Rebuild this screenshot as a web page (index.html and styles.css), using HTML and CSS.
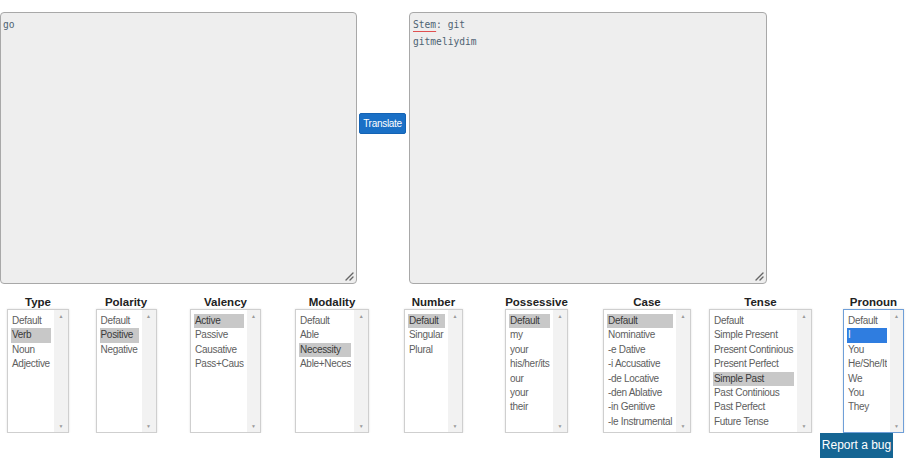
FILE: index.html
```html
<!DOCTYPE html>
<html lang="en">

<head>
 <meta charset="UTF-8">
 <meta name="viewport" content="width=device-width, initial-scale=1.0">
 <title>Turkish Verb Translator</title>
 <link rel="stylesheet" href="styles.css">
</head>

<body>
 <div class="translator">
  <div class="area">go
   <svg class="grip" width="10" height="10" viewBox="0 0 10 10"><path d="M9 2 L2 9 M9 6 L6 9" stroke="#666" stroke-width="1.4" stroke-linecap="round"/></svg>
  </div>
  <button class="translate">Translate</button>
  <div class="area result"><span class="typo">Stem</span>: git<br>gitmeliydim
   <svg class="grip" width="10" height="10" viewBox="0 0 10 10"><path d="M9 2 L2 9 M9 6 L6 9" stroke="#666" stroke-width="1.4" stroke-linecap="round"/></svg>
  </div>
 </div>

 <div class="options">
  <div class="group">
   <h3>Type</h3>
   <div class="list w-type">
    <ul><li>Default</li><li class="sel">Verb</li><li>Noun</li><li>Adjective</li></ul>
    <div class="bar"><span>&#9650;</span><span>&#9660;</span></div>
   </div>
  </div>
  <div class="group">
   <h3>Polarity</h3>
   <div class="list w-polarity">
    <ul><li>Default</li><li class="sel">Positive</li><li>Negative</li></ul>
    <div class="bar"><span>&#9650;</span><span>&#9660;</span></div>
   </div>
  </div>
  <div class="group">
   <h3>Valency</h3>
   <div class="list w-valency">
    <ul><li class="sel">Active</li><li>Passive</li><li>Causative</li><li>Pass+Caus</li></ul>
    <div class="bar"><span>&#9650;</span><span>&#9660;</span></div>
   </div>
  </div>
  <div class="group">
   <h3>Modality</h3>
   <div class="list w-modality">
    <ul><li>Default</li><li>Able</li><li class="sel">Necessity</li><li>Able+Neces</li></ul>
    <div class="bar"><span>&#9650;</span><span>&#9660;</span></div>
   </div>
  </div>
  <div class="group">
   <h3>Number</h3>
   <div class="list w-number">
    <ul><li class="sel">Default</li><li>Singular</li><li>Plural</li></ul>
    <div class="bar"><span>&#9650;</span><span>&#9660;</span></div>
   </div>
  </div>
  <div class="group">
   <h3>Possessive</h3>
   <div class="list w-possessive">
    <ul><li class="sel">Default</li><li>my</li><li>your</li><li>his/her/its</li><li>our</li><li>your</li><li>their</li></ul>
    <div class="bar"><span>&#9650;</span><span>&#9660;</span></div>
   </div>
  </div>
  <div class="group">
   <h3>Case</h3>
   <div class="list w-case">
    <ul><li class="sel">Default</li><li>Nominative</li><li>-e Dative</li><li>-i Accusative</li><li>-de Locative</li><li>-den Ablative</li><li>-in Genitive</li><li>-le Instrumental</li></ul>
    <div class="bar"><span>&#9650;</span><span>&#9660;</span></div>
   </div>
  </div>
  <div class="group">
   <h3>Tense</h3>
   <div class="list w-tense">
    <ul><li>Default</li><li>Simple Present</li><li>Present Continious</li><li>Present Perfect</li><li class="sel">Simple Past</li><li>Past Continious</li><li>Past Perfect</li><li>Future Tense</li></ul>
    <div class="bar"><span>&#9650;</span><span>&#9660;</span></div>
   </div>
  </div>
  <div class="group">
   <h3>Pronoun</h3>
   <div class="list w-pronoun focus">
    <ul><li>Default</li><li class="sel">I</li><li>You</li><li>He/She/It</li><li>We</li><li>You</li><li>They</li></ul>
    <div class="bar"><span>&#9650;</span><span>&#9660;</span></div>
   </div>
  </div>
 </div>

 <a class="bug" href="#">Report a bug</a>
</body>

</html>
```

FILE: styles.css
```css
html, body {
 margin: 0;
 overflow: hidden;
 background: #fff;
 font-family: 'Liberation Sans', Arial, sans-serif;
}

.translator {
 display: flex;
 align-items: flex-start;
 padding-top: 12px;
}

.area {
 position: relative;
 box-sizing: border-box;
 width: 357px;
 height: 272px;
 padding: 4px 2px;
 background-color: #eeeeee;
 border: 1px solid #a8a8a8;
 border-radius: 4px;
 font-family: 'DejaVu Sans Mono', 'Liberation Mono', monospace;
 font-size: 9.6px;
 line-height: 16.5px;
 color: #4d6272;
}

.area.result {
 width: 358px;
 margin-left: 3px;
 padding-left: 3px;
}

.typo {
 text-decoration: underline #e05050;
 text-decoration-thickness: 1px;
 text-underline-offset: 3px;
}

.grip {
 position: absolute;
 right: 2px;
 bottom: 2px;
}

.translate {
 margin: 101px 0 0 2px;
 width: 47px;
 height: 21px;
 padding: 0;
 border: 1px solid #1463b4;
 border-radius: 2px;
 background-color: #1a70c6;
 color: #fff;
 font-family: 'Liberation Sans', Arial, sans-serif;
 font-size: 10px;
 letter-spacing: -0.3px;
}

.options {
 display: grid;
 grid-template-columns: 76px 100px 99px 114px 89px 117px 104px 123px 103px;
 width: 925px;
 margin-top: 12px;
}

.group {
 display: flex;
 flex-direction: column;
 align-items: center;
}

.group h3 {
 margin: 0;
 height: 13px;
 font-size: 11.5px;
 line-height: 13px;
 font-weight: bold;
 color: #222;
}

.list {
 display: flex;
 box-sizing: border-box;
 height: 124px;
 border: 1px solid #cfcfcf;
 box-shadow: 0 0 2px rgba(0, 0, 0, .12);
 background: #fff;
}

.list ul {
 flex: 1;
 list-style: none;
 margin: 0;
 padding: 4px 3px 0 3px;
}

.list li {
 height: 14.4px;
 line-height: 14.4px;
 padding-left: 1px;
 font-size: 10px;
 letter-spacing: -0.3px;
 color: #5e5e5e;
 white-space: nowrap;
 overflow: hidden;
}

.list li.sel {
 background-color: #c8c8c8;
 color: #3a3a3a;
}

.list.focus {
 border-color: #6f9fd8;
}

.list.focus li.sel {
 background-color: #2f7de0;
 color: #fff;
}

.bar {
 display: flex;
 flex-direction: column;
 justify-content: space-between;
 width: 14px;
 background-color: #f2f2f2;
 padding: 3px 0;
 font-size: 5px;
 color: #9a9a9a;
 text-align: center;
}

.w-type { width: 62px; }
.w-polarity { width: 61px; }
.w-valency { width: 71px; }
.w-modality { width: 74px; }
.w-number { width: 59px; }
.w-possessive { width: 63px; }
.w-case { width: 88px; }
.w-tense { width: 103px; }
.w-pronoun { width: 61px; }

.bug {
 position: fixed;
 right: 18px;
 bottom: 0;
 width: 73px;
 height: 25px;
 line-height: 25px;
 text-align: center;
 background-color: #156593;
 color: #fff;
 font-size: 12px;
 text-decoration: none;
}
```
